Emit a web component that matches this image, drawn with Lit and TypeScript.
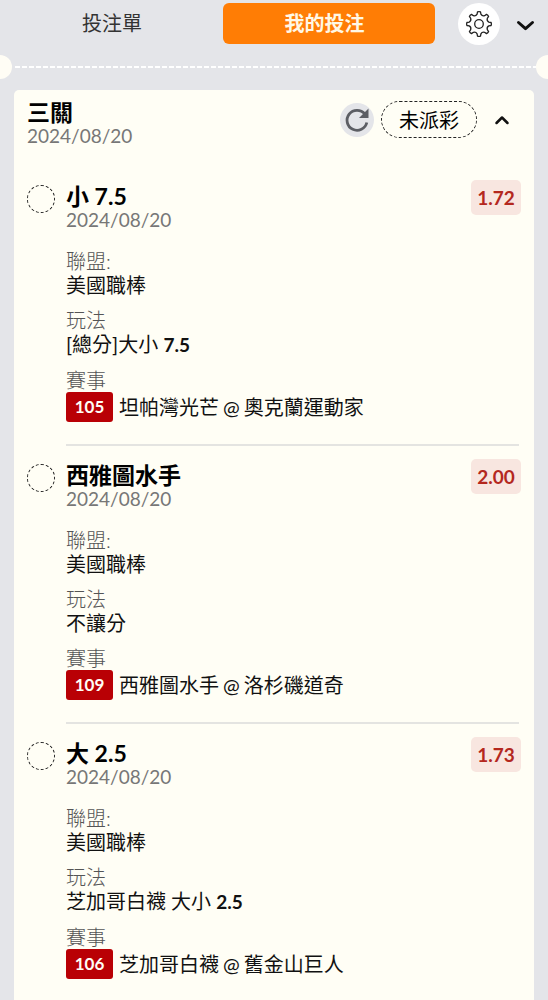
import { LitElement, html, css } from "lit";
import { customElement, property, state } from "lit/decorators.js";

interface Bet {
  pick: string;
  date: string;
  odds: string;
  league: string;
  market: string;
  line: string;
  code: string;
  away: string;
  home: string;
}

const BETS: Bet[] = [
  { pick: "小 7.5", date: "2024/08/20", odds: "1.72", league: "美國職棒", market: "[總分]大小", line: "7.5", code: "105", away: "坦帕灣光芒", home: "奧克蘭運動家" },
  { pick: "西雅圖水手", date: "2024/08/20", odds: "2.00", league: "美國職棒", market: "不讓分", line: "", code: "109", away: "西雅圖水手", home: "洛杉磯道奇" },
  { pick: "大 2.5", date: "2024/08/20", odds: "1.73", league: "美國職棒", market: "芝加哥白襪 大小", line: "2.5", code: "106", away: "芝加哥白襪", home: "舊金山巨人" },
];

/** Outline of an eight-toothed cog centred on 14,14. */
function cogPath(): string {
  const points: string[] = [];
  const at = (r: number, deg: number) => {
    const a = (deg * Math.PI) / 180;
    return `${(14 + r * Math.cos(a)).toFixed(2)} ${(14 + r * Math.sin(a)).toFixed(2)}`;
  };
  for (let i = 0; i < 8; i++) {
    const c = i * 45 - 90;
    points.push(`${i ? "L" : "M"}${at(12.2, c - 7)}`);
    points.push(`Q${at(12.7, c)} ${at(12.2, c + 7)}`);
    points.push(`L${at(10, c + 11)}`);
    points.push(`Q${at(8.2, c + 22.5)} ${at(10, c + 34)}`);
  }
  return points.join("") + "Z";
}

@customElement("bet-item")
export class BetItem extends LitElement {
  @property({ attribute: false }) bet!: Bet;

  static styles = css`
    :host { display: grid; grid-template-columns: 39px 1fr; padding-top: 17px; }
    .status { box-sizing: border-box; width: 28px; height: 28px; margin-top: 1px; border: 1px dashed #222; border-radius: 50%; }
    .head { display: flex; justify-content: space-between; align-items: flex-start; margin-bottom: 17px; }
    h2 { margin: 0; font-size: 23px; line-height: 24px; font-weight: 700; color: #000; }
    .date { font-size: 19px; line-height: 24px; color: #777; }
    .odds { box-sizing: border-box; min-width: 50px; padding: 0 5px; margin-top: -4px; border-radius: 5px; background: #f8e6e0; color: #b4281e; font-size: 19px; line-height: 35px; font-weight: 700; text-align: center; }
    dl { display: grid; row-gap: 11px; margin: 0; padding-bottom: 22px; font-size: 20px; line-height: 24px; }
    dt { color: #555; font-weight: 300; }
    dd { margin: 0; color: #111; }
    b { font-size: 19px; }
    .match { display: flex; align-items: center; line-height: 30px; }
    .teams { display: flex; gap: 4px; }
    .code { box-sizing: border-box; min-width: 47px; margin-right: 6px; padding: 0 8px; border-radius: 3px; background: #b90005; color: #fffdf5; font-size: 17px; font-weight: 700; text-align: center; }
    .rule { height: 2px; margin: 0 2px 0 0; border: 0; background: #e4e4e1; }
    :host(:last-of-type) .rule { display: none; }
  `;

  render() {
    const b = this.bet;
    return html`
      <span class="status"></span>
      <div>
        <div class="head">
          <div><h2>${b.pick}</h2><div class="date">${b.date}</div></div>
          <span class="odds">${b.odds}</span>
        </div>
        <dl>
          <div><dt>聯盟:</dt><dd>${b.league}</dd></div>
          <div><dt>玩法</dt><dd>${b.market}${b.line ? html` <b>${b.line}</b>` : ""}</dd></div>
          <div>
            <dt>賽事</dt>
            <dd class="match">
              <span class="code">${b.code}</span>
              <span class="teams"><span>${b.away}</span><span>@</span><span>${b.home}</span></span>
            </dd>
          </div>
        </dl>
        <hr class="rule" />
      </div>
    `;
  }
}

@customElement("app-root")
export class AppRoot extends LitElement {
  @state() private tab = 1;
  @state() private open = true;

  static styles = css`
    :host { display: flex; flex-direction: column; min-height: 100vh; background: #e4e5e9; color: #000; font-family: Lato, "Noto Sans CJK TC", sans-serif; }
    button { margin: 0; padding: 0; border: 0; background: none; color: inherit; font: inherit; cursor: pointer; }
    svg { display: block; }
    .bar { display: flex; align-items: flex-start; padding: 3px 11px 2px 6px; }
    .tabs { display: grid; grid-template-columns: 1fr 1fr; gap: 5px; flex: 1; }
    .tab { height: 41px; border-radius: 6px; font-size: 20px; line-height: 41px; color: #333; }
    .tab.on { padding-right: 9px; background: #ff7d05; color: #fff8e6; font-weight: 700; }
    .gear { display: grid; place-items: center; width: 42px; height: 42px; margin: 0 15px 0 23px; border-radius: 50%; background: #fff; }
    .hide { height: 42px; }
    .tear { position: relative; overflow: hidden; height: 24px; margin: 8px 0 11px; display: flex; align-items: center; }
    .dashes { flex: 1; height: 2px; margin: 0 11px 0 15px; background: repeating-linear-gradient(90deg, #fff 0 5px, transparent 5px 7px); }
    .notch { position: absolute; top: 0; width: 24px; height: 24px; border-radius: 50%; background: #fffdf5; }
    .notch.left { left: -12px; }
    .notch.right { right: -12px; }
    .card { flex: 1; margin: 0 14px; padding: 10px 13px 0; border-radius: 5px 5px 0 0; background: #fffef5; }
    .top { display: flex; justify-content: space-between; height: 67px; }
    h1 { margin: 0; font-size: 23px; line-height: 24px; font-weight: 700; }
    .date { font-size: 19px; line-height: 24px; color: #777; }
    .actions { display: flex; align-items: center; height: 39px; }
    .refresh { display: grid; place-items: center; width: 34px; height: 34px; margin-right: 7px; border-radius: 50%; background: #e4e5e9; }
    .pill { height: 37px; padding: 0 17px; border: 1px dashed #222; border-radius: 19px; font-size: 20px; }
    .fold { padding: 8px; margin: 0 2px 0 8px; }
    .fold.shut { transform: rotate(180deg); }
  `;

  render() {
    return html`
      <nav class="bar">
        <div class="tabs">
          ${["投注單", "我的投注"].map(
            (name, i) => html`<button class="tab ${this.tab === i ? "on" : ""}" @click=${() => (this.tab = i)}>${name}</button>`
          )}
        </div>
        <button class="gear" aria-label="設定">
          <svg width="28" height="28" viewBox="0 0 28 28" fill="none" stroke="#222" stroke-width="1.3" stroke-linejoin="round">
            <path d=${cogPath()} /><circle cx="14" cy="14" r="4.3" />
          </svg>
        </button>
        <button class="hide" aria-label="收合">
          <svg width="22" height="22" viewBox="0 0 22 22" fill="none" stroke="#111" stroke-width="3" stroke-linecap="round" stroke-linejoin="round"><path d="M3.500 9.500 10.500 15.700l7-6.200" /></svg>
        </button>
      </nav>
      <div class="tear"><span class="notch left"></span><span class="dashes"></span><span class="notch right"></span></div>
      <main class="card">
        <header class="top">
          <div><h1>三關</h1><div class="date">2024/08/20</div></div>
          <div class="actions">
            <button class="refresh" aria-label="重新整理">
              <svg width="26" height="26" viewBox="0 0 26 26"><path d="M20.800 7A10 10 0 1 0 22.800 15.500" fill="none" stroke="#5c5e64" stroke-width="2.800" /><path d="M24.500 1.500v9.500h-9.500z" fill="#5c5e64" /></svg>
            </button>
            <button class="pill">未派彩</button>
            <button class="fold ${this.open ? "" : "shut"}" aria-label="展開" @click=${() => (this.open = !this.open)}>
              <svg width="18" height="18" viewBox="0 0 18 18" fill="none" stroke="#111" stroke-width="2.500" stroke-linecap="round" stroke-linejoin="round"><path d="M3.500 12 9 6.500l5.500 5.500" /></svg>
            </button>
          </div>
        </header>
        ${this.open ? BETS.map((bet) => html`<bet-item .bet=${bet}></bet-item>`) : ""}
      </main>
    `;
  }
}
